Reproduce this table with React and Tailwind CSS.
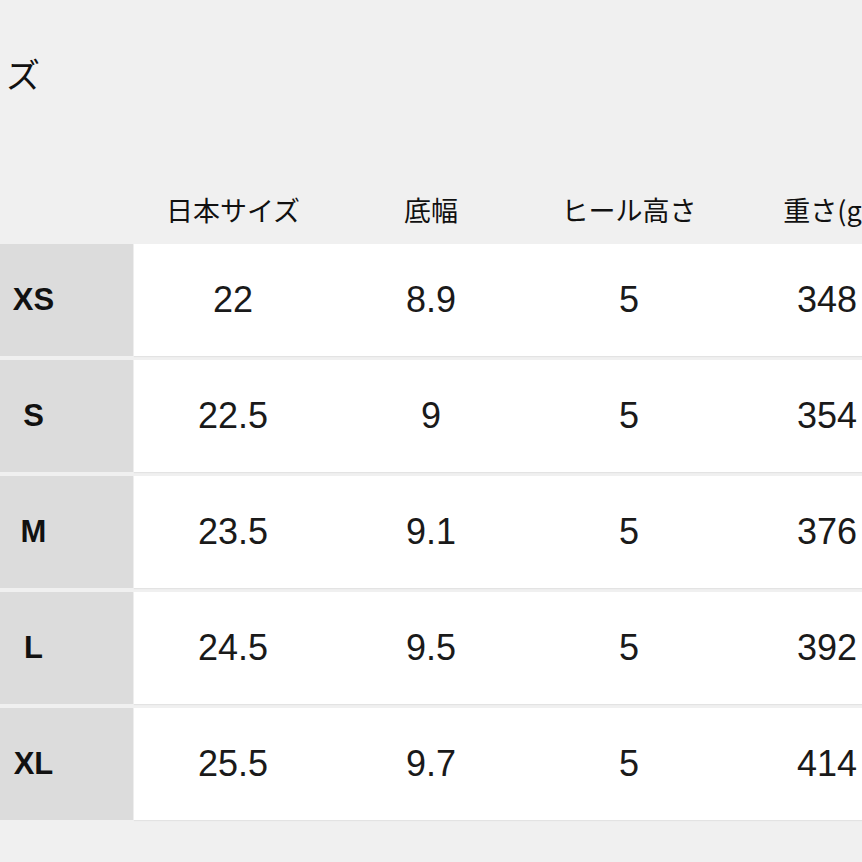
import React from "react";

const rows = [
  ["XS", "22", "8.9", "5", "348"],
  ["S", "22.5", "9", "5", "354"],
  ["M", "23.5", "9.1", "5", "376"],
  ["L", "24.5", "9.5", "5", "392"],
  ["XL", "25.5", "9.7", "5", "414"],
];

const headers = ["日本サイズ", "底幅", "ヒール高さ", "重さ(g)"];

export default function App() {
  return (
    <div className="w-[862px] h-[862px] overflow-hidden bg-[#f0f0f0] text-[#111]">
      <div className="h-[176px] pt-[52px]">
        <div
          className="ml-[-66px] text-[34px] leading-[44px] whitespace-nowrap"
          style={{ fontFamily: '"Noto Sans CJK JP", sans-serif' }}
        >
          サイ<span className="ml-[4px]">ズ</span>
        </div>
      </div>
      <div className="ml-[-66px] w-[1000px]">
        <div
          className="flex h-[68px] items-center"
          style={{ fontFamily: '"Noto Sans CJK JP", sans-serif' }}
        >
          <div className="w-[200px] shrink-0" />
          {headers.map((h) => (
            <div
              key={h}
              className="w-[198px] shrink-0 text-center text-[27px] leading-[34px] whitespace-nowrap"
            >
              {h}
            </div>
          ))}
        </div>
        <div className="flex flex-col gap-[4px]">
          {rows.map((r) => (
            <div key={r[0]} className="flex h-[112px] gap-px">
              <div
                className="w-[199px] shrink-0 bg-[#dcdcdc] flex items-center justify-center text-[31px] font-bold"
                style={{ fontFamily: '"Liberation Sans", Arial, sans-serif' }}
              >
                {r[0]}
              </div>
              <div
                className="flex flex-1 bg-white shadow-[0_1px_1px_rgba(0,0,0,0.05)] text-[#1a1a1a]"
                style={{ fontFamily: '"Liberation Sans", Arial, sans-serif' }}
              >
                {r.slice(1).map((v, i) => (
                  <div
                    key={i}
                    className="w-[198px] shrink-0 flex items-center justify-center text-[36px]"
                  >
                    {v}
                  </div>
                ))}
              </div>
            </div>
          ))}
        </div>
      </div>
    </div>
  );
}
